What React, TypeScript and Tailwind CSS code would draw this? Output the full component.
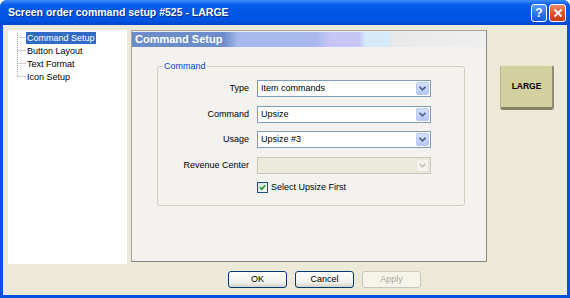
import React from "react";

const treeItems = ["Command Setup", "Button Layout", "Text Format", "Icon Setup"];

const Chevron = ({ color }: { color: string }) => (
  <svg width="7" height="5" viewBox="0 0 7 5">
    <path d="M0.5 0.8 L3.5 3.8 L6.5 0.8" fill="none" stroke={color} strokeWidth="1.6" />
  </svg>
);

const Dropdown = ({ value, disabled }: { value?: string; disabled?: boolean }) => (
  <div
    className={`flex h-[17px] w-[174px] items-center border ${
      disabled ? "border-[#C9C7BA] bg-[#EBEADB]" : "border-[#7F9DB9] bg-white"
    }`}
  >
    <span className="flex-1 pl-[3px] text-[9px] leading-none text-black">{value}</span>
    <span
      className={`mr-px flex h-[13px] w-[13px] items-center justify-center rounded-[2px] border ${
        disabled
          ? "border-[#E8E6DC] bg-[#F4F3EE]"
          : "border-[#B9CBF5] bg-[linear-gradient(to_bottom,#D3E0FD,#B5C9F7)]"
      }`}
    >
      <Chevron color={disabled ? "#C9C7BA" : "#4D6185"} />
    </span>
  </div>
);

const Row = ({ label, children }: { label: string; children: React.ReactNode }) => (
  <div className="flex h-[17px] items-center">
    <span className="w-[92px] pr-px text-right text-[9px] leading-none text-black">{label}</span>
    <div className="ml-[7px]">{children}</div>
  </div>
);

const XpButton = ({ label, disabled }: { label: string; disabled?: boolean }) => (
  <div
    className={`flex h-[17px] w-[59px] items-center justify-center rounded-[3px] border text-[9px] leading-none ${
      disabled
        ? "border-[#C9C7BA] bg-[#F5F4EA] text-[#ACA899]"
        : "border-[#003C74] bg-[linear-gradient(to_bottom,#FFFFFF,#F0F0EA_70%,#D6D0C5)] text-black"
    }`}
  >
    {label}
  </div>
);

export default function App() {
  return (
    <div className="flex h-[298px] w-[570px] flex-col overflow-hidden rounded-t-[7px] bg-[#0450E0] font-['Liberation_Sans',Arial,sans-serif]">
      {/* title bar */}
      <div className="flex h-[25px] items-center bg-[linear-gradient(to_bottom,#3D8DFB_0%,#0A5EEC_18%,#0256E6_50%,#0154E2_80%,#0045CF_100%)] pl-[8px] pr-[4px]">
        <span className="flex-1 text-[10.5px] font-bold text-white [text-shadow:1px_1px_0_#0A2B8A]">
          Screen order command setup #525 - LARGE
        </span>
        <div className="flex gap-[2px]">
          <div className="flex h-[18px] w-[16px] items-center justify-center rounded-[3px] border border-white bg-[linear-gradient(to_bottom,#5A9CFF,#2B6FF0_60%,#1A5BE0)] text-[12px] font-bold leading-none text-white">
            ?
          </div>
          <div className="flex h-[18px] w-[17px] items-center justify-center rounded-[3px] border border-white bg-[linear-gradient(to_bottom,#F08A6A,#DC4A25_60%,#C53A18)]">
            <svg width="10" height="10" viewBox="0 0 10 10">
              <path d="M1.5 1.5 L8.5 8.5 M8.5 1.5 L1.5 8.5" stroke="white" strokeWidth="1.8" />
            </svg>
          </div>
        </div>
      </div>

      {/* body */}
      <div className="mx-[3px] mb-[3px] flex flex-1 flex-col bg-[#ECE9D8] pl-[5px] pt-[5px]">
        <div className="flex h-[234px] items-start">
          {/* tree */}
          <div className="flex h-[234px] w-[119px] bg-white pt-px">
            <svg width="18" height="52" viewBox="0 0 18 52" className="shrink-0">
              <g stroke="#A0A0A0" strokeDasharray="1 1" strokeWidth="1">
                <path d="M9.5 2 V45.5" />
                <path d="M9.5 6.5 H18" />
                <path d="M9.5 19.5 H18" />
                <path d="M9.5 32.5 H18" />
                <path d="M9.5 45.5 H18" />
              </g>
            </svg>
            <div className="flex flex-col">
              {treeItems.map((t, i) => (
                <div key={t} className="flex h-[13px] items-center">
                  <span
                    className={`px-px text-[9px] leading-[12px] ${
                      i === 0 ? "bg-[#316AC5] text-white" : "text-black"
                    }`}
                  >
                    {t}
                  </span>
                </div>
              ))}
            </div>
          </div>

          {/* main panel */}
          <div className="ml-[4px] flex h-[232px] w-[356px] flex-col border border-[#A5A5A0] border-b-[#888880] border-r-[#888880] bg-[#F3F2EE]">
            <div className="mt-px flex h-[15px] items-center bg-[linear-gradient(to_right,#6C8DC9_0%,#6C8DC9_26%,#A8B9EE_30%,#A9B9EE_52%,#C6C5F4_56%,#C6C5F4_64%,#D6EAF9_66%,#D6EAF9_72%,#E9E9E9_74%,#EFEFEF_100%)] pl-[3px]">
              <span className="text-[11px] font-bold leading-none text-white">Command Setup</span>
            </div>

            <fieldset className="ml-[25px] mt-[14px] w-[308px] rounded-[3px] border border-[#D0D0BF] pb-[12px] pt-[8px]">
              <legend className="ml-[5px] px-px text-[9px] leading-[11px] text-[#0046D5]">Command</legend>
              <div className="flex flex-col gap-[8.5px]">
                <Row label="Type">
                  <Dropdown value="Item commands" />
                </Row>
                <Row label="Command">
                  <Dropdown value="Upsize" />
                </Row>
                <Row label="Usage">
                  <Dropdown value="Upsize #3" />
                </Row>
                <Row label="Revenue Center">
                  <Dropdown disabled />
                </Row>
                <div className="flex h-[11px] items-center pl-[99px]">
                  <span className="flex h-[11px] w-[11px] items-center justify-center border border-[#1C5180] bg-[linear-gradient(135deg,#DCDCD7,#FFFFFF)]">
                    <svg width="7" height="7" viewBox="0 0 7 7">
                      <path d="M0.8 3.3 L2.8 5.3 L6.2 1.2" fill="none" stroke="#21A121" strokeWidth="1.7" />
                    </svg>
                  </span>
                  <span className="ml-[3px] text-[9px] leading-none text-black">Select Upsize First</span>
                </div>
              </div>
            </fieldset>
          </div>

          {/* preview */}
          <div className="flex flex-1 justify-center pt-[35px]">
            <div className="flex h-[45px] w-[54px] items-center justify-center rounded-[3px] border border-[#B4B090] border-b-[3px] border-b-[#85826A] border-r-[2px] border-r-[#8F8C74] border-t-[#E8E6C8] bg-[#D4D1A0]">
              <span className="text-[8.5px] font-bold leading-none text-black">LARGE</span>
            </div>
          </div>
        </div>

        {/* dialog buttons */}
        <div className="mt-[7px] flex gap-[8px] pl-[220px]">
          <XpButton label="OK" />
          <XpButton label="Cancel" />
          <XpButton label="Apply" disabled />
        </div>
      </div>
    </div>
  );
}
